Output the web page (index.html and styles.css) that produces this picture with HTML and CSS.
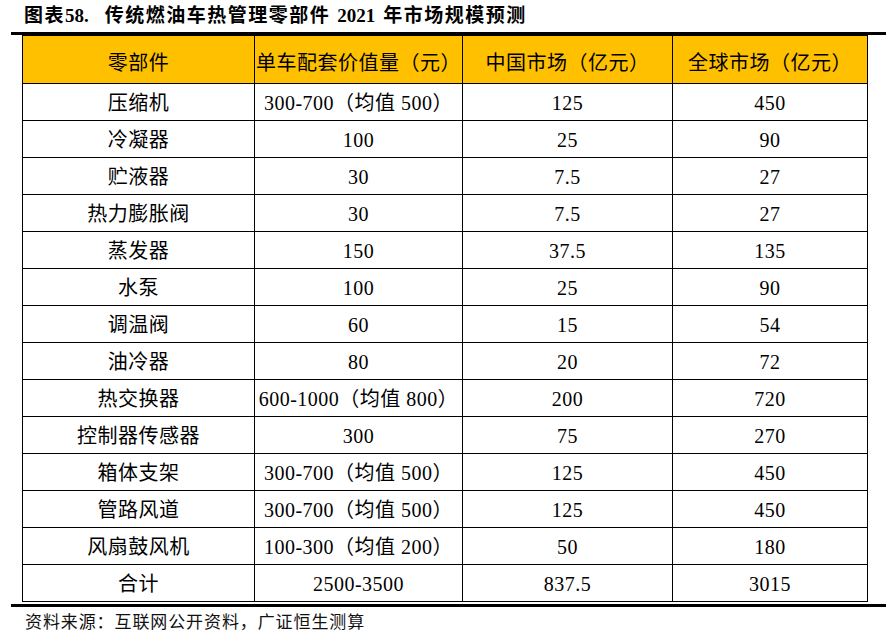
FILE: index.html
```html
<!DOCTYPE html>
<html lang="zh">
<head>
<meta charset="utf-8">
<title>图表58</title>
<link rel="stylesheet" href="styles.css">
</head>
<body>
<div class="page">
  <h1 class="title">图表<span class="num lead">58.</span>传统燃油车热管理零部件<span class="num mid">2021</span>年市场规模预测</h1>
  <div class="rule"></div>
  <table class="data">
    <colgroup>
      <col class="c1"><col class="c2"><col class="c3"><col class="c4">
    </colgroup>
    <thead>
      <tr><th>零部件</th><th>单车配套价值量（元）</th><th>中国市场（亿元）</th><th>全球市场（亿元）</th></tr>
    </thead>
    <tbody>
      <tr><td>压缩机</td><td>300-700（均值 500）</td><td>125</td><td>450</td></tr>
      <tr><td>冷凝器</td><td>100</td><td>25</td><td>90</td></tr>
      <tr><td>贮液器</td><td>30</td><td>7.5</td><td>27</td></tr>
      <tr><td>热力膨胀阀</td><td>30</td><td>7.5</td><td>27</td></tr>
      <tr><td>蒸发器</td><td>150</td><td>37.5</td><td>135</td></tr>
      <tr><td>水泵</td><td>100</td><td>25</td><td>90</td></tr>
      <tr><td>调温阀</td><td>60</td><td>15</td><td>54</td></tr>
      <tr><td>油冷器</td><td>80</td><td>20</td><td>72</td></tr>
      <tr><td>热交换器</td><td>600-1000（均值 800）</td><td>200</td><td>720</td></tr>
      <tr><td>控制器传感器</td><td>300</td><td>75</td><td>270</td></tr>
      <tr><td>箱体支架</td><td>300-700（均值 500）</td><td>125</td><td>450</td></tr>
      <tr><td>管路风道</td><td>300-700（均值 500）</td><td>125</td><td>450</td></tr>
      <tr><td>风扇鼓风机</td><td>100-300（均值 200）</td><td>50</td><td>180</td></tr>
      <tr><td>合计</td><td>2500-3500</td><td>837.5</td><td>3015</td></tr>
    </tbody>
  </table>
  <div class="rule rule-bottom"></div>
  <p class="source">资料来源：互联网公开资料，广证恒生测算</p>
</div>
</body>
</html>
```

FILE: styles.css
```css
html, body {
  margin: 0;
  padding: 0;
  background: #ffffff;
}

body {
  font-family: "Liberation Serif", "Noto Sans CJK SC", serif;
  color: #000000;
}

.page {
  width: 875px;
  padding-left: 11px;
}

.title {
  margin: 0;
  height: 32px;
  padding-left: 13px;
  font-size: 19px;
  font-weight: bold;
  line-height: 32px;
  letter-spacing: 1.5px;
  white-space: nowrap;
}

.title .num {
  letter-spacing: 0;
}

.title .lead {
  margin-right: 16px;
}

.title .mid {
  margin: 0 8px 0 7px;
}

.rule {
  height: 3px;
  background: #000000;
}

.rule-bottom {
  margin-top: 2px;
}

.data {
  margin-left: 11px;
  width: 845px;
  border-collapse: collapse;
  table-layout: fixed;
  font-size: 20px;
}

.data .c1 { width: 232px; }
.data .c2 { width: 208px; }
.data .c3 { width: 210px; }
.data .c4 { width: 195px; }

.data th,
.data td {
  border: 1px solid #000000;
  padding: 0;
  text-align: center;
  vertical-align: middle;
  font-weight: normal;
  line-height: 24px;
  letter-spacing: 0.5px;
  white-space: nowrap;
}

.data thead th {
  background: #ffc000;
  height: 48px;
  padding-top: 7px;
  box-sizing: border-box;
}

.data tbody td {
  height: 37px;
  box-sizing: border-box;
  padding-top: 1px;
}

.source {
  margin: 0;
  padding-left: 14px;
  font-size: 17px;
  line-height: 32px;
  letter-spacing: 0.9px;
  color: #111111;
}
```
